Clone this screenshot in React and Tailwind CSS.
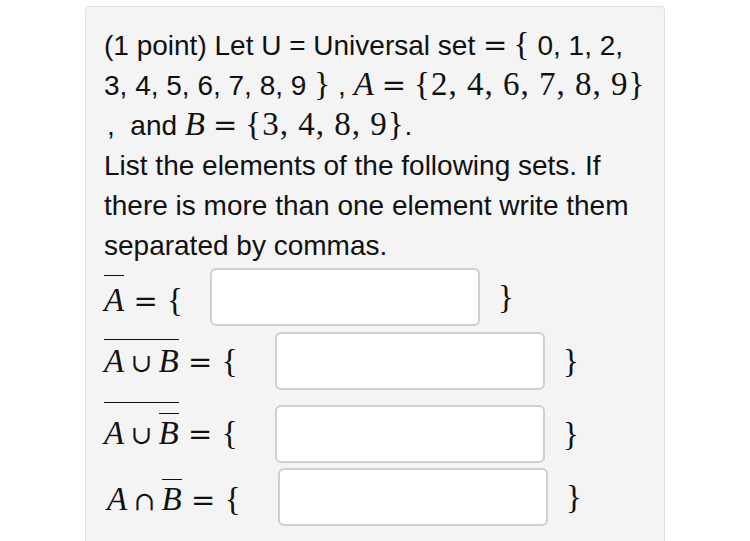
const M = ({ children, className = "" }) => (
  <span className={`font-['Liberation_Serif',serif] text-[33px] tracking-[0.3px] ${className}`}>{children}</span>
);

const I = ({ children }) => <span className="italic">{children}</span>;

const Eq = ({ m = "mx-[9px]" }) => (
  <span className={`font-['DejaVu_Serif',serif] text-[29px] ${m}`}>=</span>
);
const Op = ({ children }) => (
  <span className="mx-[6px] font-['DejaVu_Serif',serif] text-[26px]">{children}</span>
);

const Bar = ({ children, pt = "pt-[3px]" }) => (
  <span className={`inline-block border-t-[1.5px] border-[#111] leading-none ${pt}`}>{children}</span>
);

const Box = () => (
  <div className="h-[58px] w-[270px] shrink-0 rounded-md border-2 border-[#cfcfcf] bg-white" />
);

const Row = ({ label, w, mt, lab = "" }) => (
  <div className={`flex h-[58px] items-center ${mt}`}>
    <M className={`${w} shrink-0 whitespace-nowrap leading-none ${lab}`}>{label}</M>
    <Box />
    <M className="ml-[18px] leading-none">{"}"}</M>
  </div>
);

export default function App() {
  return (
    <div className="min-h-screen bg-white pt-[6px] pl-[85px] pr-[85px] font-['Liberation_Sans',Arial,sans-serif] text-[#111]">
      <div className="h-[560px] w-[580px] rounded-[4px] border border-[#e0e0e0] bg-[#f4f4f4] pl-[18px] pt-[19px]">
        <div className="whitespace-nowrap text-[28px] leading-[40px]">
          (1 point) Let U = Universal set{" "}
          <M className="leading-none">
            <Eq m="mr-[6px]" />
            {"{"}
          </M>{" "}
          0, 1, 2,
          <br />
          3, 4, 5, 6, 7, 8, 9 <M className="leading-none">{"}"}</M> ,{" "}
          <M className="leading-none tracking-[1px]">
            <I>A</I>
            <Eq m="mx-[7px]" />
            {"{"}2, 4, 6, 7, 8, 9{"}"}
          </M>
          <br />
          <span className="pl-[3px]">,</span>&nbsp; and{" "}
          <M className="leading-none tracking-[1px]">
            <I>B</I>
            <Eq m="mx-[7px]" />
            {"{"}3, 4, 8, 9{"}"}
          </M>
          .
          <br />
          List the elements of the following sets. If
          <br />
          there is more than one element write them
          <br />
          separated by commas.
        </div>

        <Row
          mt="mt-[2px]"
          w="w-[106px]"
          lab="mb-[3px]"
          label={
            <>
              <Bar pt="pt-[8px]"><I>A</I></Bar>
              <Eq />
              {"{"}
            </>
          }
        />

        <Row
          mt="mt-[6px]"
          w="w-[171px]"
          lab="mb-[6px]"
          label={
            <>
              <Bar pt="pt-[5px]">
                <I>A</I>
                <Op>∪</Op>
                <I>B</I>
              </Bar>
              <Eq />
              {"{"}
            </>
          }
        />

        <Row
          mt="mt-[15px]"
          w="w-[171px]"
          lab="mb-[16px]"
          label={
            <>
              <Bar pt="pt-[10px]">
                <I>A</I>
                <Op>∪</Op>
                <Bar pt="pt-[3px]"><I>B</I></Bar>
              </Bar>
              <Eq />
              {"{"}
            </>
          }
        />

        <div className="pl-[3px]">
          <Row
            mt="mt-[5px]"
            w="w-[171px]"
            label={
              <>
                <I>A</I>
                <Op>∩</Op>
                <Bar pt="pt-[3px]"><I>B</I></Bar>
                <Eq />
                {"{"}
              </>
            }
          />
        </div>
      </div>
    </div>
  );
}
